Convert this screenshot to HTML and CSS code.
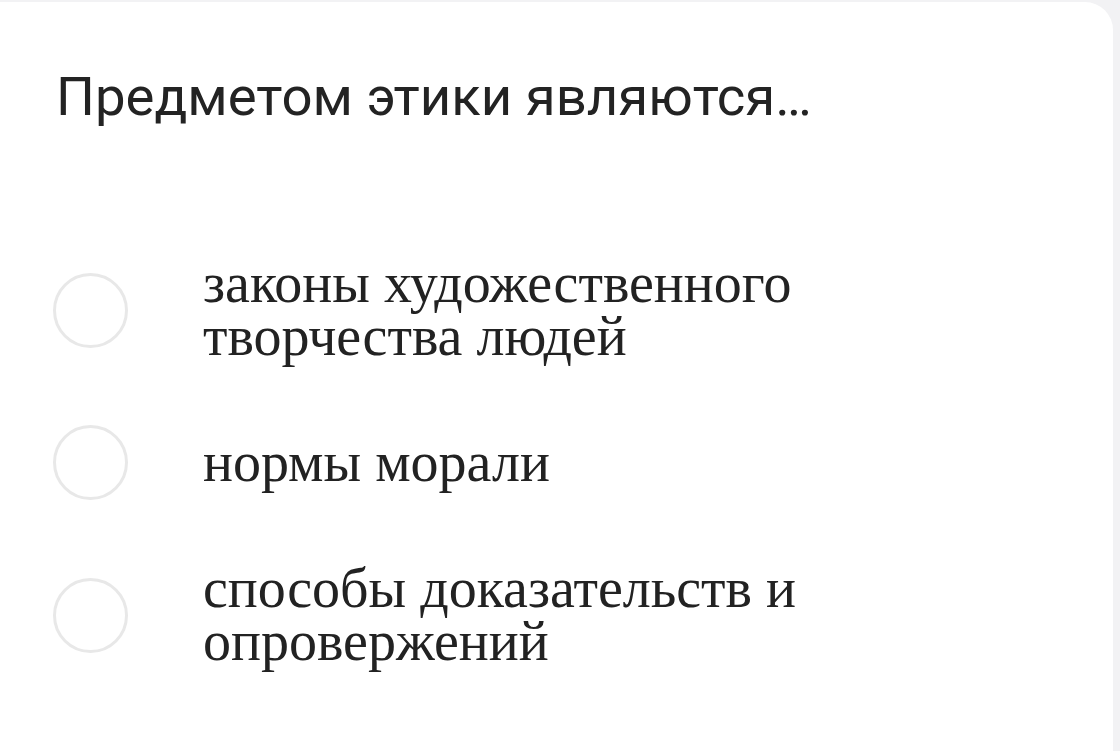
FILE: index.html
```html
<!DOCTYPE html>
<html lang="ru">
<head>
<meta charset="utf-8">
<link rel="stylesheet" href="styles.css">
</head>
<body>
<div class="card">
  <h1 class="title">Предметом этики являются…</h1>
  <div class="options">
    <label class="option"><span class="radio"></span><span class="text">законы художественного творчества людей</span></label>
    <label class="option"><span class="radio"></span><span class="text">нормы морали</span></label>
    <label class="option"><span class="radio"></span><span class="text">способы доказательств и опровержений</span></label>
  </div>
</div>
</body>
</html>
```
FILE: styles.css
```css
html, body {
  margin: 0;
  padding: 0;
  background: #f2f2f4;
  height: 100%;
  overflow: hidden;
}
.card {
  background: #ffffff;
  margin: 2px 7px 0 -30px;
  padding: 64px 0 0 86px;
  height: 760px;
  border-radius: 0 28px 0 0;
  box-sizing: border-box;
}
.title {
  margin: 0;
  font-family: Roboto, "Noto Sans", sans-serif;
  font-weight: 400;
  font-size: 54.5px;
  line-height: 60px;
  color: #232323;
}
.options {
  margin-top: 131px;
  display: flex;
  flex-direction: column;
  gap: 62px;
}
.option {
  display: flex;
  align-items: center;
}
.radio {
  flex: none;
  width: 69px;
  height: 69px;
  border: 3px solid #e8e8e8;
  border-radius: 50%;
  margin-left: -3px;
}
.text {
  margin-left: 75px;
  width: 640px;
  font-family: "Liberation Serif", "Times New Roman", serif;
  font-size: 56px;
  line-height: 53px;
  color: #222222;
}
```
